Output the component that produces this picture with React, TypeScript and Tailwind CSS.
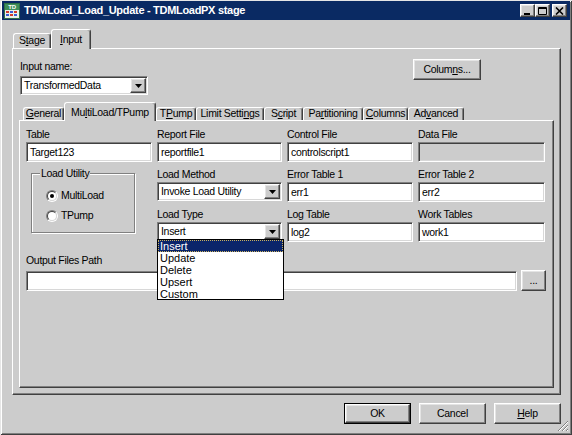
import React from 'react'

const raised =
    'border border-t-white border-l-white border-r-[#404040] border-b-[#404040] shadow-[inset_-1px_-1px_0_#808080,inset_1px_1px_0_#e4e4e4]'
const sunken =
    'border border-t-[#808080] border-l-[#808080] border-r-white border-b-white shadow-[inset_1px_1px_0_#404040,inset_-1px_-1px_0_#d8d8d8]'
const panel =
    'border border-t-white border-l-white border-r-[#404040] border-b-[#404040] shadow-[inset_-1px_-1px_0_#808080]'

function U({ c }: { c: string }) {
    return <span className="underline underline-offset-[1px]">{c}</span>
}

function Tab({ className, selected, children }: { className: string; selected?: boolean; children: React.ReactNode }) {
    return (
        <div
            className={`${className} shrink-0 flex justify-center rounded-t-[3px] border-t border-l border-r border-t-white border-l-white border-r-[#404040] shadow-[inset_-1px_0_0_#808080] whitespace-nowrap ${
                selected ? 'relative z-10 -mb-px bg-[#cccccc] pt-[2px] items-start' : 'items-center'
            }`}
        >
            {children}
        </div>
    )
}

function ArrowBtn() {
    return (
        <div className={`${raised} w-[16px] h-[15px] bg-[#cccccc] flex items-center justify-center shrink-0`}>
            <svg width="7" height="4" viewBox="0 0 7 4">
                <path d="M0 0h7L3.5 4z" fill="#000" />
            </svg>
        </div>
    )
}

function Select({ value, className = '' }: { value: string; className?: string }) {
    return (
        <div className={`${sunken} h-[19px] bg-white flex items-center pl-[3px] pr-[1px] ${className}`}>
            <span className="flex-1 whitespace-nowrap">{value}</span>
            <ArrowBtn />
        </div>
    )
}

function TextBox({ value, disabled, className = '' }: { value?: string; disabled?: boolean; className?: string }) {
    return (
        <div className={`${sunken} h-[20px] px-[3px] leading-[18px] ${disabled ? 'bg-[#cccccc]' : 'bg-white'} ${className}`}>
            {value}
        </div>
    )
}

function Field({ label, children, className = '' }: { label: string; children: React.ReactNode; className?: string }) {
    return (
        <div className={className}>
            <div className="h-[15px] leading-[15px] whitespace-nowrap">{label}</div>
            {children}
        </div>
    )
}

function Radio({ checked, label }: { checked?: boolean; label: string }) {
    return (
        <div className="h-[20px] flex items-center pl-[14px]">
            <div className="w-[12px] h-[12px] rounded-full border border-t-[#808080] border-l-[#808080] border-r-white border-b-white">
                <div className="w-[10px] h-[10px] rounded-full border border-t-[#404040] border-l-[#404040] border-r-[#d8d8d8] border-b-[#d8d8d8] bg-white flex items-center justify-center">
                    {checked && <div className="w-[4px] h-[4px] rounded-full bg-black" />}
                </div>
            </div>
            <span className="ml-[3px]">{label}</span>
        </div>
    )
}

function WinBtn({ kind }: { kind: 'min' | 'max' | 'close' }) {
    return (
        <div className={`${raised} w-[15px] h-[13px] bg-[#cccccc] flex items-center justify-center`}>
            <svg width="9" height="8" viewBox="0 0 9 8">
                {kind === 'min' && <rect x="1" y="6" width="6" height="2" fill="#000" />}
                {kind === 'max' && (
                    <path d="M0.5 0.5h8v7h-8z M0.5 1.5h8" stroke="#000" fill="none" strokeWidth="1" />
                )}
                {kind === 'close' && <path d="M1 0.5l7 7M8 0.5l-7 7" stroke="#000" strokeWidth="1.6" />}
            </svg>
        </div>
    )
}

function StageIcon() {
    return (
        <svg width="16" height="16" viewBox="0 0 16 16" className="shrink-0">
            <rect x="0.5" y="0.5" width="15" height="15" fill="#e8f0e8" stroke="#2d6e46" />
            <rect x="1" y="1" width="14" height="6" fill="#3f8f5a" />
            <text x="8" y="6.4" fontSize="6" fontWeight="bold" fill="#fff" textAnchor="middle" fontFamily="Liberation Sans, sans-serif">
                TD
            </text>
            <rect x="2" y="8" width="3" height="2" fill="#d23a2a" />
            <rect x="6" y="8" width="3" height="2" fill="#3a5ad2" />
            <rect x="10" y="8" width="3" height="2" fill="#d23a2a" />
            <rect x="2" y="11" width="3" height="2" fill="#3a5ad2" />
            <rect x="6" y="11" width="3" height="2" fill="#d23a2a" />
            <rect x="10" y="11" width="3" height="2" fill="#3a5ad2" />
        </svg>
    )
}

function Button({ children, isDefault }: { children: React.ReactNode; isDefault?: boolean }) {
    if (isDefault) {
        return (
            <div className="w-[67px] h-[21px] border border-black">
                <div className={`${raised} w-full h-full flex items-center justify-center`}>{children}</div>
            </div>
        )
    }
    return <div className={`${raised} w-[67px] h-[21px] flex items-center justify-center`}>{children}</div>
}

const loadTypes = ['Insert', 'Update', 'Delete', 'Upsert', 'Custom']

export default function App() {
    return (
        <div className="relative w-[572px] h-[435px] bg-[#cccccc] font-['Liberation_Sans',Arial,sans-serif] text-[10.5px] tracking-[-0.3px] text-black flex flex-col px-[2px] pt-[1px] overflow-hidden shadow-[inset_1px_1px_0_#e6e6e6,inset_-1px_-1px_0_#404040,inset_2px_2px_0_#ffffff,inset_-2px_-2px_0_#808080]">
            {/* title bar */}
            <div className="h-[19px] bg-[#0a2a63] flex items-center pl-[2px] pr-[3px]">
                <StageIcon />
                <span className="ml-[4px] text-white font-bold text-[11px] whitespace-nowrap">
                    TDMLoad_Load_Update - TDMLoadPX stage
                </span>
                <div className="ml-auto flex items-center">
                    <WinBtn kind="min" />
                    <WinBtn kind="max" />
                    <div className="ml-[2px]">
                        <WinBtn kind="close" />
                    </div>
                </div>
            </div>

            {/* outer tabs */}
            <div className="mt-[9px] pl-[10px] pr-[9px]">
                <div className="h-[19px] flex items-end pl-[1px]">
                    <Tab className="w-[38px] h-[15px]">
                        <span>
                            S<U c="t" />
                            age
                        </span>
                    </Tab>
                    <Tab className="w-[40px] h-[20px]" selected>
                        <span>
                            <U c="I" />
                            nput
                        </span>
                    </Tab>
                </div>

                <div className={`${panel} h-[347px] pt-[10px] pl-[6px] pr-[6px]`}>
                    <div className="flex items-start ml-[1px]">
                        <div className="w-[128px]">
                            <div className="h-[14px] leading-[14px]">Input name:</div>
                            <Select value="TransformedData" className="mt-[3px]" />
                        </div>
                        <div className="ml-[265px]">
                            <div className={`${raised} w-[68px] h-[21px] flex items-center justify-center`}>
                                <span>
                                    Colum<U c="n" />
                                    s...
                                </span>
                            </div>
                        </div>
                    </div>

                    {/* inner tabs */}
                    <div className="mt-[7px] h-[18px] flex items-end pl-[4px]">
                        <Tab className="w-[41px] h-[13px]">
                            <span>
                                <U c="G" />
                                eneral
                            </span>
                        </Tab>
                        <Tab className="w-[92px] h-[19px]" selected>
                            <span>
                                Mu<U c="l" />
                                tiLoad/TPump
                            </span>
                        </Tab>
                        <Tab className="w-[40px] h-[13px]">
                            <span>
                                T<U c="P" />
                                ump
                            </span>
                        </Tab>
                        <Tab className="w-[68px] h-[13px]">
                            <span>
                                Limit Setti<U c="n" />
                                gs
                            </span>
                        </Tab>
                        <Tab className="w-[39px] h-[13px]">
                            <span>
                                S<U c="c" />
                                ript
                            </span>
                        </Tab>
                        <Tab className="w-[60px] h-[13px]">
                            <span>
                                Pa<U c="r" />
                                titioning
                            </span>
                        </Tab>
                        <Tab className="w-[45px] h-[13px]">
                            <span>
                                <U c="C" />
                                olumns
                            </span>
                        </Tab>
                        <Tab className="w-[56px] h-[13px]">
                            <span>
                                Ad<U c="v" />
                                anced
                            </span>
                        </Tab>
                    </div>

                    <div className={`${panel} h-[268px] pt-[6px] pl-[6px]`}>
                        <div className="grid grid-cols-[126px_125px_126px_127px] gap-x-[5px] gap-y-[5px]">
                            <Field label="Table">
                                <TextBox value="Target123" />
                            </Field>
                            <Field label="Report File">
                                <TextBox value="reportfile1" />
                            </Field>
                            <Field label="Control File">
                                <TextBox value="controlscript1" />
                            </Field>
                            <Field label="Data File">
                                <TextBox disabled />
                            </Field>

                            <div className="row-span-2">
                                <div className="relative ml-[5px] mt-[6px] w-[104px] h-[60px] border border-[#808080] shadow-[1px_1px_0_#ffffff,inset_1px_1px_0_#ffffff] pt-[12px]">
                                    <span className="absolute -top-[8px] left-[8px] bg-[#cccccc] px-[1px] leading-[14px]">
                                        Load Utility
                                    </span>
                                    <Radio checked label="MultiLoad" />
                                    <Radio label="TPump" />
                                </div>
                            </div>
                            <Field label="Load Method">
                                <Select value="Invoke Load Utility" />
                            </Field>
                            <Field label="Error Table 1">
                                <TextBox value="err1" />
                            </Field>
                            <Field label="Error Table 2">
                                <TextBox value="err2" />
                            </Field>

                            <Field label="Load Type" className="relative">
                                <Select value="Insert" />
                                <div className="absolute left-0 top-[32px] z-20 w-[127px] h-[61px] border border-black bg-white text-[11px] tracking-normal">
                                    {loadTypes.map((t, i) => (
                                        <div
                                            key={t}
                                            className={`h-[12px] leading-[12px] pl-[2px] ${
                                                i === 0 ? 'bg-[#0a246a] text-white outline outline-1 outline-dotted outline-[#c8b060] -outline-offset-1' : ''
                                            }`}
                                        >
                                            {t}
                                        </div>
                                    ))}
                                </div>
                            </Field>
                            <Field label="Log Table">
                                <TextBox value="log2" />
                            </Field>
                            <Field label="Work Tables">
                                <TextBox value="work1" />
                            </Field>
                        </div>

                        <div className="mt-[11px] h-[15px] leading-[15px]">Output Files Path</div>
                        <div className="mt-[2px] w-[520px] flex items-center gap-[4px]">
                            <TextBox className="flex-1" />
                            <div className={`${raised} w-[25px] h-[21px] flex items-center justify-center`}>...</div>
                        </div>
                    </div>
                </div>
            </div>

            {/* bottom buttons */}
            <div className="mt-[8px] flex justify-end gap-[8px] pr-[9px]">
                <Button isDefault>OK</Button>
                <Button>Cancel</Button>
                <Button>
                    <span>
                        <U c="H" />
                        elp
                    </span>
                </Button>
            </div>

            {/* size grip */}
            <svg width="12" height="12" viewBox="0 0 12 12" className="absolute right-[3px] bottom-[3px]">
                <path d="M11 1L1 11M11 5L5 11M11 9L9 11" stroke="#808080" strokeWidth="1" />
                <path d="M11 2L2 11M11 6L6 11M11 10L10 11" stroke="#ffffff" strokeWidth="1" />
            </svg>
        </div>
    )
}
